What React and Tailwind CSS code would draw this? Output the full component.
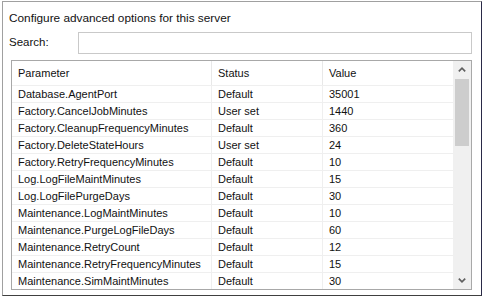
import React from 'react';

const rows = [
  ['Database.AgentPort', 'Default', '35001'],
  ['Factory.CancelJobMinutes', 'User set', '1440'],
  ['Factory.CleanupFrequencyMinutes', 'Default', '360'],
  ['Factory.DeleteStateHours', 'User set', '24'],
  ['Factory.RetryFrequencyMinutes', 'Default', '10'],
  ['Log.LogFileMaintMinutes', 'Default', '15'],
  ['Log.LogFilePurgeDays', 'Default', '30'],
  ['Maintenance.LogMaintMinutes', 'Default', '10'],
  ['Maintenance.PurgeLogFileDays', 'Default', '60'],
  ['Maintenance.RetryCount', 'Default', '12'],
  ['Maintenance.RetryFrequencyMinutes', 'Default', '15'],
  ['Maintenance.SimMaintMinutes', 'Default', '30'],
];

const Chevron = ({ up }) => (
  <svg width="8" height="5" viewBox="0 0 8 5">
    <path
      d={up ? 'M0.8 4.3 L4 1.2 L7.2 4.3' : 'M0.8 0.7 L4 3.8 L7.2 0.7'}
      fill="none"
      stroke="#606060"
      strokeWidth="1.7"
    />
  </svg>
);

export default function App() {
  return (
    <div className="w-[486px] h-[298px] bg-white pt-px pl-[2px] text-[11px] text-[#111] font-['Liberation_Sans',Arial,sans-serif]">
      <div className="w-[480px] h-[295px] border border-t-[#a0a0a0] border-l-[#a0a0a0] border-r-[#2a2a48] border-b-[#404040]">
        {/* heading */}
        <div className="pt-[9px] pl-[6px] h-[23px] leading-[14px] text-[11.8px]">Configure advanced options for this server</div>

        {/* search */}
        <div className="flex items-center mt-[7px]">
          <div className="w-[75px] pl-[6px] text-[11.5px]">Search:</div>
          <div className="w-[394px] h-[22px] border border-[#c9c9c9] bg-white" />
        </div>

        {/* grid */}
        <div className="mt-[6px] ml-[8px] w-[461px] h-[230px] border border-[#a8a8a8] flex overflow-hidden">
          <div className="w-[441px] flex flex-col">
            <div className="grid grid-cols-[200px_111px_130px] h-[25px] border-b border-[#efefef] shrink-0">
              <div className="pl-[6px] flex items-center border-r border-[#e8e8e8]">Parameter</div>
              <div className="pl-[6px] flex items-center border-r border-[#e8e8e8]">Status</div>
              <div className="pl-[6px] flex items-center">Value</div>
            </div>
            {rows.map(([p, s, v]) => (
              <div key={p} className="grid grid-cols-[200px_111px_130px] h-[17px] border-b border-[#efefef] shrink-0 leading-[16px]">
                <div className="pl-[6px] border-r border-[#efefef] whitespace-nowrap">{p}</div>
                <div className="pl-[6px] border-r border-[#efefef]">{s}</div>
                <div className="pl-[6px]">{v}</div>
              </div>
            ))}
          </div>

          {/* scrollbar */}
          <div className="w-[18px] bg-[#f0f0f0] flex flex-col">
            <div className="h-[17px] flex items-center justify-center shrink-0">
              <Chevron up />
            </div>
            <div className="mx-[2px] mt-px h-[67px] bg-[#cdcdcd] shrink-0" />
            <div className="flex-1" />
            <div className="h-[17px] flex items-center justify-center shrink-0">
              <Chevron />
            </div>
          </div>
        </div>
      </div>
    </div>
  );
}
